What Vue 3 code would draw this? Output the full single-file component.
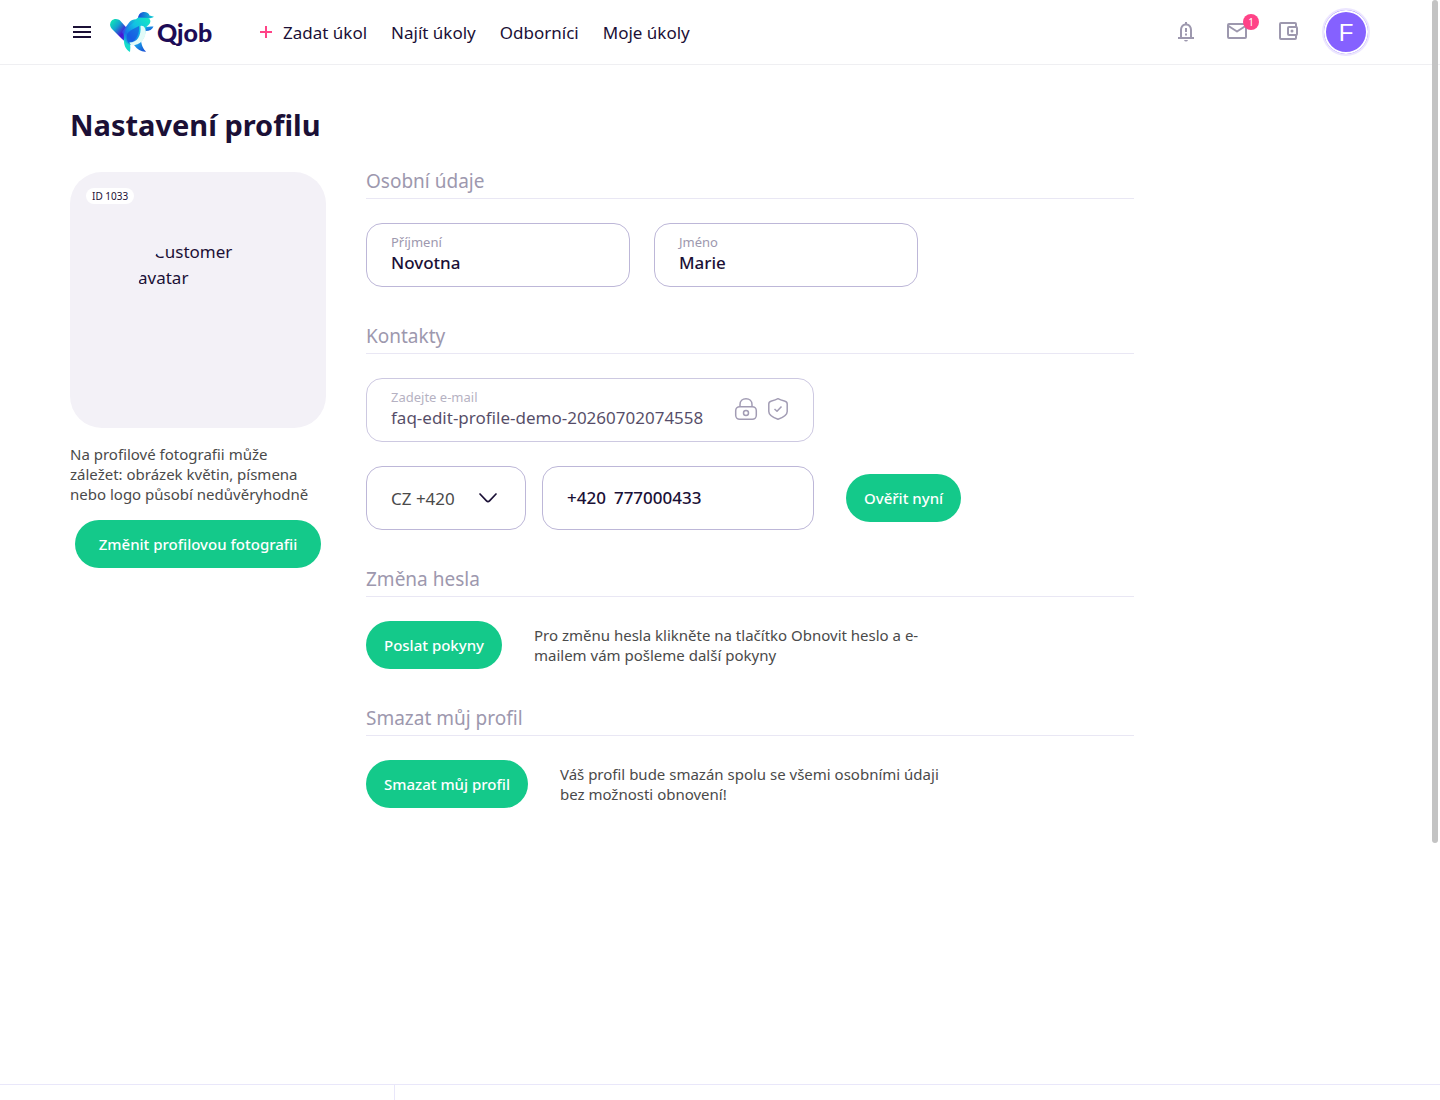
<script setup>
import { ref } from 'vue'

const links = ['Najít úkoly', 'Odborníci', 'Moje úkoly']
const surname = ref('Novotna')
const firstName = ref('Marie')
const email = ref('faq-edit-profile-demo-20260702074558')
const country = ref('CZ +420')
const phone = ref('777000433')
</script>

<template>
  <div class="page">
    <header class="header">
      <button class="icon-btn menu" type="button" aria-label="Menu">
        <svg width="24" height="24" viewBox="0 0 24 24" fill="#1b1036">
          <path d="M3 6h18v2H3zM3 11h18v2H3zM3 16h18v2H3z" />
        </svg>
      </button>
      <a class="logo" href="#">
        <svg width="44" height="40" viewBox="0 0 44 40" aria-hidden="true">
          <defs>
            <linearGradient id="wingL" x1="0" y1="0.1" x2="0.9" y2="0.9">
              <stop offset="0" stop-color="#0fe8b4" />
              <stop offset="0.3" stop-color="#12a5cf" />
              <stop offset="0.62" stop-color="#4a10d4" />
              <stop offset="1" stop-color="#1c6fe6" />
            </linearGradient>
            <linearGradient id="wingR" x1="0.9" y1="0" x2="0.1" y2="1">
              <stop offset="0" stop-color="#16d5d0" />
              <stop offset="0.45" stop-color="#1a8be8" />
              <stop offset="1" stop-color="#4a18dc" />
            </linearGradient>
            <linearGradient id="body" x1="1" y1="0" x2="0" y2="1">
              <stop offset="0" stop-color="#14ecc0" />
              <stop offset="0.45" stop-color="#12bfe4" />
              <stop offset="0.75" stop-color="#1672e8" />
              <stop offset="1" stop-color="#14dcd0" />
            </linearGradient>
            <linearGradient id="cap" x1="0" y1="0" x2="1" y2="0">
              <stop offset="0" stop-color="#1747d8" />
              <stop offset="1" stop-color="#12d8d4" />
            </linearGradient>
            <linearGradient id="tail" x1="0" y1="0" x2="1" y2="1">
              <stop offset="0" stop-color="#19bdf0" />
              <stop offset="1" stop-color="#1746d2" />
            </linearGradient>
          </defs>
          <path d="M1.300 9C4 6.300 8 6.500 10.500 9L23 23L18 31C15 30 13 28 10.500 25.500L2 17C-.3 14.500 -.5 11.300 1.300 9Z" fill="url(#wingL)" />
          <path d="M12 20L19.500 10C22 7 26 6.500 30 8L27 22L16 30Z" fill="url(#wingR)" />
          <path d="M14 26L20 31C20.500 34 20.500 37 20 40C15.500 37.500 13.500 33 14 26Z" fill="#16dccb" />
          <path d="M24 33L31 29C32 35 34 37.500 36 39.700C31.500 40 27.500 38 24 33Z" fill="url(#tail)" />
          <path d="M33 16C37 14.200 40 14.800 43.500 14.500C42 18 39 19.500 33.500 19Z" fill="url(#tail)" />
          <path d="M28 6C28.500 2 31 0 34 0C37 0 39 1.500 39.500 3.500L44 4.800C42.500 6.300 39 6.600 36 6.500Z" fill="url(#cap)" />
          <path d="M29 5.500L38 6C40 7 41 8.500 40 11C39 13.500 36 14 35.500 17C36 25 31 33 23 33C17 33.500 13.500 29 14 23C14.500 16 22 13 25 9C26.200 7.300 27.200 5.500 29 5.500Z" fill="url(#body)" />
          <path d="M17 23C18 19 24 16.500 29 14C30 21 26 30 18.500 31C16.500 28.500 16.200 26 17 23Z" fill="#174fe0" opacity=".65" />
          <path d="M30.500 14C34 13 36.200 17 35.700 21C35 27.500 30 33.700 21 33.200L19.500 30.500C27 30.500 31.500 24 30.500 14Z" fill="#e2fbf8" />
        </svg>
        <span class="wordmark">Qjob</span>
      </a>
      <nav class="nav">
        <a href="#" class="add">
          <svg width="12" height="12" viewBox="0 0 12 12" fill="#ff4387"><path d="M5 0h2v5h5v2H7v5H5V7H0V5h5z" /></svg>
          Zadat úkol
        </a>
        <a v-for="l in links" :key="l" href="#">{{ l }}</a>
      </nav>
      <div class="tools">
        <button class="icon-btn" type="button" aria-label="Oznámení">
          <svg width="24" height="24" viewBox="0 0 24 24" fill="#9d98ae">
            <path d="M11 2h2v1.600c3.200.6 5 3.200 5 6.400v7h2v2H4v-2h2v-7c0-3.200 1.800-5.800 5-6.400zM12 5.400c-2.600 0-4 2-4 4.600v7h8v-7c0-2.600-1.400-4.600-4-4.600z" />
            <path d="M11 8h2v4h-2zM11 13.500h2v2h-2zM10 20h4q-.5 1.500-2 1.500T10 20z" />
          </svg>
        </button>
        <button class="icon-btn" type="button" aria-label="Zprávy">
          <svg width="24" height="24" viewBox="0 0 24 24" fill="none" stroke="#9d98ae" stroke-width="2" stroke-linejoin="round">
            <rect x="3" y="4" width="18" height="14" rx="1" />
            <path d="M3.500 6L12 11.500L20.500 6" />
          </svg>
          <span class="count">1</span>
        </button>
        <button class="icon-btn" type="button" aria-label="Peněženka">
          <svg width="24" height="24" viewBox="0 0 24 24" fill="none" stroke="#9d98ae" stroke-width="2" stroke-linejoin="round">
            <path d="M20 7V4q0-1-1-1H5Q4 3 4 4v14q0 1 1 1h14q1 0 1-1v-3" />
            <rect x="12" y="7" width="9" height="8" rx="1" />
            <circle cx="16" cy="11" r="1.500" fill="#9d98ae" stroke="none" />
          </svg>
        </button>
        <a class="user" href="#">F</a>
      </div>
    </header>

    <main class="main">
      <h1>Nastavení profilu</h1>
      <div class="columns">
        <aside class="side">
          <div class="photo">
            <span class="id">ID 1033</span>
            <div class="avatar"><span class="glyph"></span>Customer avatar</div>
          </div>
          <p class="note">Na profilové fotografii může záležet: obrázek květin, písmena nebo logo působí nedůvěryhodně</p>
          <button class="btn wide" type="button">Změnit profilovou fotografii</button>
        </aside>

        <form class="form" @submit.prevent>
          <section>
            <h2>Osobní údaje</h2>
            <div class="row names">
              <label class="field"><span>Příjmení</span><input v-model="surname" type="text" /></label>
              <label class="field"><span>Jméno</span><input v-model="firstName" type="text" /></label>
            </div>
          </section>

          <section>
            <h2>Kontakty</h2>
            <div class="field email">
              <label class="stack"><span>Zadejte e-mail</span><input v-model="email" type="text" disabled /></label>
              <svg width="24" height="24" viewBox="0 0 24 24" fill="none" stroke="#847c9c" stroke-width="1.500">
                <rect x="1.700" y="9.700" width="20.600" height="12.600" rx="4" />
                <path d="M6 9.500V7.500C6 4 8.500 1.700 12 1.700S18 4 18 7.500v2" />
                <circle cx="12" cy="16" r="2.500" />
              </svg>
              <svg width="24" height="24" viewBox="0 0 24 24" fill="none" stroke="#847c9c" stroke-width="1.500" stroke-linejoin="round">
                <path d="M12 1.700C14.500 3.200 16.500 3.600 19 4.200Q21.200 4.800 21.200 7v7.500C21.200 18 17 20.500 12 22.300C7 20.500 2.800 18 2.800 14.500V7Q2.800 4.800 5 4.200C7.500 3.600 9.500 3.200 12 1.700Z" />
                <path d="M8.500 12L11 14.300L15.500 9.500" />
              </svg>
            </div>
            <div class="row phones">
              <div class="field country">
                <select v-model="country" aria-label="Předvolba"><option>CZ +420</option></select>
                <svg width="18" height="10" viewBox="0 0 18 10" fill="none" stroke="#1b1036" stroke-width="1.700" stroke-linecap="round"><path d="M1 1L7.500 7.800Q9 9.200 10.500 7.800L17 1" /></svg>
              </div>
              <label class="field phone"><b>+420</b><input v-model="phone" type="text" aria-label="Telefon" /></label>
              <button class="btn verify" type="button">Ověřit nyní</button>
            </div>
          </section>

          <section>
            <h2>Změna hesla</h2>
            <div class="row action">
              <button class="btn" type="button">Poslat pokyny</button>
              <p>Pro změnu hesla klikněte na tlačítko Obnovit heslo a e-mailem vám pošleme další pokyny</p>
            </div>
          </section>

          <section>
            <h2>Smazat můj profil</h2>
            <div class="row action">
              <button class="btn" type="button">Smazat můj profil</button>
              <p>Váš profil bude smazán spolu se všemi osobními údaji bez možnosti obnovení!</p>
            </div>
          </section>
        </form>
      </div>
    </main>

    <footer class="footer"><div></div><div></div></footer>
    <div class="scroll"></div>
  </div>
</template>

<style>
body {
  background: #fff;
}
</style>

<style scoped>
* {
  box-sizing: border-box;
}
.page {
  position: relative;
  display: flex;
  flex-direction: column;
  min-height: 100vh;
  font-family: "Noto Sans", "Open Sans", sans-serif;
  font-size: 17px;
  color: #1b1036;
}
a {
  color: inherit;
  text-decoration: none;
}
button,
input,
select {
  font: inherit;
  color: inherit;
}
.header {
  display: flex;
  align-items: center;
  height: 65px;
  padding: 0 70px;
  border-bottom: 1px solid #efeff2;
}
.icon-btn {
  position: relative;
  display: flex;
  padding: 0;
  border: 0;
  background: none;
}
.logo {
  display: flex;
  align-items: center;
  gap: 3px;
  margin-left: 16px;
}
.wordmark {
  width: 57px;
  font-family: Lato, sans-serif;
  font-size: 25px;
  font-weight: 900;
  line-height: 40px;
  color: #1d0b56;
}
.nav {
  display: flex;
  gap: 24px;
  margin-left: 46px;
  white-space: nowrap;
}
.add {
  display: flex;
  align-items: center;
  gap: 11px;
}
.tools {
  display: flex;
  align-items: center;
  gap: 27px;
  margin-left: auto;
}
.count {
  position: absolute;
  top: -6px;
  right: -10px;
  width: 16px;
  border-radius: 8px;
  background: #ff4387;
  color: #fff;
  font-size: 10px;
  line-height: 16px;
  text-align: center;
}
.user {
  width: 48px;
  height: 48px;
  margin-left: -5px;
  border: 2px solid #ece6ff;
  border-radius: 50%;
  background: #8561ff;
  box-shadow: inset 0 0 0 2px #fff;
  color: #fff;
  font-family: "Liberation Sans", sans-serif;
  font-size: 24px;
  line-height: 45px;
  text-align: center;
}
.main {
  flex: 1;
  padding: 40px 70px;
}
h1 {
  margin: 0 0 27px;
  font-size: 29px;
  font-weight: 700;
  line-height: 40px;
}
.columns {
  display: flex;
  gap: 40px;
}
.side {
  display: flex;
  flex: 0 0 256px;
  flex-direction: column;
  align-items: center;
}
.photo {
  position: relative;
  display: flex;
  align-items: center;
  justify-content: center;
  width: 100%;
  height: 256px;
  border-radius: 32px;
  background: #f3f1f7;
}
.id {
  position: absolute;
  top: 16px;
  left: 16px;
  padding: 0 6px;
  border-radius: 8px;
  background: #fff;
  font-size: 10px;
  line-height: 16px;
}
.avatar {
  width: 124px;
  height: 124px;
  padding: 1px 0 0 2px;
  overflow: hidden;
  border-radius: 50%;
  line-height: 26px;
}
.glyph {
  display: inline-block;
  width: 16px;
}
p {
  margin: 0;
  font-size: 15px;
  line-height: 20px;
  color: #4a4a4a;
}
.note {
  margin: 16px 0;
  padding-right: 8px;
}
.btn {
  flex: none;
  height: 48px;
  padding: 0 18px;
  border: 0;
  border-radius: 24px;
  background: #14c98a;
  color: #fff;
  font-size: 15px;
  font-weight: 500;
}
.wide {
  padding: 0 24px;
}
.form {
  display: flex;
  flex: 0 1 768px;
  flex-direction: column;
  gap: 40px;
}
h2 {
  margin: 0 0 24px;
  padding-bottom: 8px;
  border-bottom: 1px solid #e9e7f4;
  font-size: 19px;
  font-weight: 400;
  line-height: 18px;
  color: #9d98ae;
}
.row {
  display: flex;
  align-items: center;
}
.names {
  gap: 24px;
}
.field {
  display: flex;
  flex-direction: column;
  justify-content: center;
  width: 264px;
  height: 64px;
  padding: 0 24px 2px;
  border: 1px solid #bdb7d8;
  border-radius: 16px;
  font-weight: 500;
}
.field span {
  font-size: 13px;
  font-weight: 400;
  line-height: 16px;
  color: #9d98ae;
}
.field input {
  width: 100%;
  min-width: 0;
  height: 24px;
  padding: 0;
  border: 0;
  background: none;
  outline: none;
}
.email {
  flex-direction: row;
  align-items: center;
  gap: 8px;
  width: 448px;
  margin-bottom: 24px;
  padding-right: 23px;
  font-weight: 400;
  opacity: .75;
}
.stack {
  display: flex;
  flex: 1;
  flex-direction: column;
  min-width: 0;
  margin-right: 8px;
}
.phones {
  gap: 16px;
}
.country {
  flex-direction: row;
  align-items: center;
  width: 160px;
  padding-bottom: 0;
  font-weight: 400;
  color: #4a4a4a;
}
.country select {
  flex: 1;
  min-width: 0;
  padding: 0;
  border: 0;
  appearance: none;
  background: none;
  outline: none;
}
.country svg {
  margin-right: 4px;
}
.phone {
  flex-direction: row;
  align-items: center;
  gap: 8px;
  width: 272px;
}
.phone b {
  font-weight: 500;
}
.verify {
  margin-left: 16px;
}
.action {
  gap: 32px;
}
.action p {
  max-width: 400px;
}
.footer {
  display: grid;
  grid-template-columns: 395px 1fr;
  height: 16px;
  border-top: 1px solid #e9e7fa;
}
.footer div:first-child {
  border-right: 1px solid #e9e7fa;
}
.scroll {
  position: absolute;
  top: 0;
  right: 2px;
  width: 6px;
  height: calc(100vh - 257px);
  border-radius: 3px;
  background: #c3c3c3;
}
</style>
